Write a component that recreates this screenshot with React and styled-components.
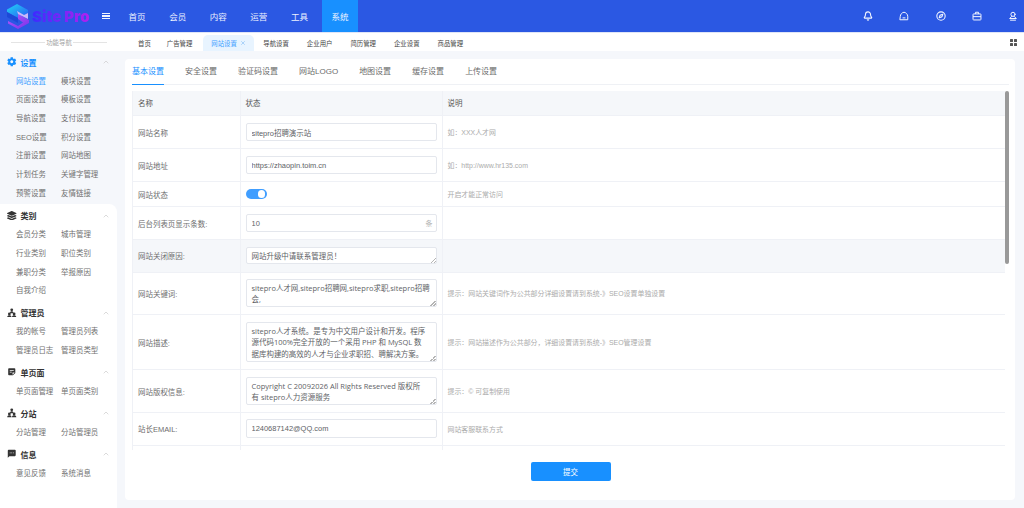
import styled, { createGlobalStyle } from 'styled-components';
import { Bell, ChevronUp, Compass, X } from 'lucide-react';
import { FaCog, FaLayerGroup } from 'react-icons/fa';
import { MdSms, MdStickyNote2 } from 'react-icons/md';

const FONT = '"Liberation Sans", "Noto Sans CJK SC", sans-serif';
const BLUE = '#1890ff';

const GlobalStyle = createGlobalStyle`
    html, body {
        margin: 0;
        padding: 0;
        height: 100%;
        overflow: hidden;
        background: #f5f7fb;
        font-family: ${FONT};
    }
    * {
        box-sizing: border-box;
    }
`;

const Page = styled.div`
    width: 1024px;
    height: 508px;
    display: flex;
    flex-direction: column;
    overflow: hidden;
`;

const Header = styled.header`
    flex: none;
    height: 33px;
    display: flex;
    align-items: stretch;
    background: #2b58e3;
    border-bottom: 1px solid #dfe5f7;
    color: #fff;
    padding-right: 6px;
`;

const Brand = styled.div`
    width: 102px;
    display: flex;
    align-items: center;
    gap: 2px;
    padding-left: 6px;
`;

const BrandName = styled.span`
    font-family: Inter, sans-serif;
    font-weight: 900;
    font-size: 15px;
    white-space: nowrap;
    background: linear-gradient(90deg, #3a2cff, #b420f0);
    -webkit-background-clip: text;
    background-clip: text;
    color: transparent;
`;

const MenuToggle = styled.div`
    width: 8px;
    display: flex;
    flex-direction: column;
    justify-content: center;
    gap: 1px;
    & > i {
        display: block;
        height: 1.4px;
        background: #f2f5ff;
    }
`;

const Nav = styled.nav`
    display: flex;
    gap: 4.4px;
    margin-left: 9px;
`;

const NavItem = styled.div`
    width: 36.2px;
    display: flex;
    align-items: center;
    justify-content: center;
    font-size: 8.5px;
    color: #eef2ff;
    background: ${(p) => (p.$active ? BLUE : 'transparent')};
`;

const HeaderIcons = styled.div`
    margin-left: auto;
    display: flex;
    align-items: center;
    gap: 26.2px;
    & > svg {
        width: 10px;
        height: 10px;
        color: #f2f5ff;
    }
`;

const Body = styled.div`
    flex: 1;
    min-height: 0;
    display: flex;
`;

const Sidebar = styled.aside`
    flex: none;
    width: 117px;
    display: flex;
    flex-direction: column;
`;

const SideTitle = styled.div`
    flex: none;
    height: 18px;
    background: #fff;
    display: flex;
    align-items: center;
    gap: 1px;
    padding: 0 10px 0 11px;
    font-size: 6.4px;
    color: #a3a3a3;
    &::before,
    &::after {
        content: '';
        flex: 1;
        height: 1px;
        background: #e4e4e4;
    }
`;

const ActiveGroup = styled.div`
    flex: none;
    padding-top: 2px;
`;

const RestGroups = styled.div`
    flex: 1;
    background: #fff;
    border-top-right-radius: 8px;
    padding-top: 2.5px;
`;

const Group = styled.section`
    padding-bottom: ${(p) => (p.$tight ? '2.5px' : '4.3px')};
`;

const GroupHead = styled.div`
    height: 18px;
    display: flex;
    align-items: center;
    padding: 0 7px;
    font-size: 8px;
    font-weight: 700;
    color: ${(p) => (p.$active ? BLUE : '#333')};
    & > svg:first-child {
        width: 9.5px;
        height: 9.5px;
        margin-right: 4px;
        color: ${(p) => (p.$active ? BLUE : '#333')};
    }
    & > svg:last-child {
        margin-left: auto;
        width: 8px;
        height: 8px;
        color: #c9c9c9;
    }
`;

const GroupItems = styled.div`
    display: grid;
    grid-template-columns: 45px 1fr;
    grid-auto-rows: 18.67px;
    align-items: center;
    padding-left: 16px;
`;

const GroupLink = styled.a`
    font-size: 7.47px;
    white-space: nowrap;
    color: ${(p) => (p.$active ? '#3d9eff' : '#707070')};
`;

const Main = styled.main`
    flex: 1;
    min-width: 0;
    display: flex;
    flex-direction: column;
`;

const TabBar = styled.div`
    flex: none;
    height: 18px;
    background: #fff;
    display: flex;
    align-items: flex-end;
    padding: 0 7px 0 12px;
`;

const PageTab = styled.div`
    position: relative;
    height: 16px;
    display: flex;
    align-items: center;
    gap: 3.4px;
    padding: 0 ${(p) => (p.$active ? '8px' : '9px')};
    margin-left: ${(p) => (p.$active ? '2px' : '0')};
    font-size: 6.4px;
    white-space: nowrap;
    color: ${(p) => (p.$active ? '#3d9eff' : '#444')};
    background: ${(p) => (p.$active ? '#e8f4ff' : 'transparent')};
    border-radius: 5px 5px 0 0;
    &:first-child {
        padding-right: 7px;
    }
    & > svg {
        width: 6px;
        height: 6px;
        color: #6fb3f3;
    }
`;

const GridIcon = styled.div`
    margin: 0 0 5.5px auto;
    width: 7px;
    height: 7px;
    display: grid;
    grid-template-columns: 1fr 1fr;
    gap: 1px;
    & > i {
        background: #555;
        border-radius: 0.5px;
    }
`;

const Content = styled.div`
    flex: 1;
    min-height: 0;
    padding: 8px 9px 8px 8px;
`;

const Card = styled.div`
    height: 100%;
    background: #fff;
    border-radius: 4px;
    padding: 0 6px 0 7px;
    display: flex;
    flex-direction: column;
`;

const CardTabs = styled.div`
    flex: none;
    height: 26px;
    display: flex;
    gap: 21px;
    border-bottom: 1px solid #eff1f5;
`;

const CardTab = styled.div`
    height: 25.5px;
    display: flex;
    align-items: center;
    padding-bottom: 1.5px;
    font-size: 8px;
    color: ${(p) => (p.$active ? BLUE : '#6b6b6b')};
    border-bottom: 1.5px solid ${(p) => (p.$active ? BLUE : 'transparent')};
`;

const TableArea = styled.div`
    position: relative;
    flex: none;
    height: 359px;
    margin-top: 5.5px;
    padding-right: 4px;
    overflow: hidden;
`;

const ScrollThumb = styled.div`
    position: absolute;
    top: 0;
    right: 0;
    width: 3.6px;
    height: 173px;
    background: #999;
    border-radius: 2px;
`;

const Table = styled.table`
    width: 100%;
    table-layout: fixed;
    border-collapse: collapse;
    font-size: 7.47px;
`;

const Row = styled.tr`
    height: ${(p) => p.$h}px;
    background: ${(p) => (p.$shaded ? '#f5f7fa' : '#fff')};
`;

const HeadCell = styled.th`
    padding: 0 5px;
    font-weight: 400;
    text-align: left;
    color: #555;
    background: #f5f7fa;
    border: 1px solid #eff1f6;
    border-width: 0 0 1px 1px;
`;

const Cell = styled.td`
    padding: 0 5px;
    font-size: ${(p) => (p.$hint ? '6.93px' : '7.47px')};
    color: ${(p) => (p.$hint ? '#ababab' : '#6e6e6e')};
    border: 1px solid #eff1f6;
    border-width: 0 0 1px 1px;
    white-space: ${(p) => (p.$hint ? 'nowrap' : 'normal')};
`;

const TextInput = styled.input`
    display: block;
    width: 100%;
    height: 18.7px;
    padding: 0 5px;
    font: 7.47px ${FONT};
    color: #606266;
    background: #fff;
    border: 1px solid #e4e7ed;
    border-radius: 2px;
    outline: none;
`;

const TextBlock = styled.textarea`
    display: block;
    width: 100%;
    height: ${(p) => p.$h}px;
    padding: 2.5px 5px;
    font: 7.47px/11.7px "Open Sans", "Noto Sans CJK SC", sans-serif;
    color: #606266;
    background: #fff;
    border: 1px solid #e4e7ed;
    border-radius: 2px;
    outline: none;
    resize: vertical;
    overflow: hidden;
    &::-webkit-resizer {
        background: linear-gradient(135deg, transparent 50%, #b5b5b5 50%, #b5b5b5 60%, transparent 60%, transparent 75%, #b5b5b5 75%, #b5b5b5 85%, transparent 85%) right bottom / 6px 6px no-repeat;
    }
`;

const UnitField = styled.div`
    display: flex;
    align-items: center;
    height: 18.7px;
    padding: 0 3px 0 5px;
    background: #fff;
    border: 1px solid #e4e7ed;
    border-radius: 2px;
    & > input {
        flex: 1;
        min-width: 0;
        border: 0;
        outline: none;
        padding: 0;
        font: 7.47px ${FONT};
        color: #606266;
    }
    & > span {
        font-size: 7px;
        color: #b5b5b5;
    }
`;

const Toggle = styled.div`
    width: 21px;
    height: 9.6px;
    padding: 1.2px;
    display: flex;
    justify-content: flex-end;
    border-radius: 5px;
    background: #409eff;
    & > i {
        width: 7.2px;
        height: 7.2px;
        border-radius: 50%;
        background: #fff;
    }
`;

const CardFooter = styled.div`
    flex: 1;
    display: flex;
    justify-content: center;
    align-items: flex-start;
    padding-top: 12.5px;
`;

const SubmitButton = styled.button`
    width: 80px;
    height: 18.7px;
    padding: 0;
    border: 0;
    border-radius: 2px;
    background: ${BLUE};
    color: #fff;
    font: 7.47px ${FONT};
`;

const Logo = () => (
    <svg width="24" height="27" viewBox="0 0 24 27">
        <defs>
            <linearGradient id="logoTop" x1="0" y1="0" x2="1" y2="1">
                <stop offset="0" stopColor="#1fd6f5" />
                <stop offset="1" stopColor="#2a5cf5" />
            </linearGradient>
            <linearGradient id="logoBottom" x1="0" y1="0" x2="1" y2="1">
                <stop offset="0" stopColor="#b45cff" />
                <stop offset="1" stopColor="#7a2fe8" />
            </linearGradient>
        </defs>
        <polygon points="11,1 22,7 22,10 12,15 1,9 1,6.5" fill="url(#logoTop)" />
        <polygon points="1,9 12,15 12,20 1,14" fill="#1d49d8" />
        <polygon points="12,11 23,17 23,20 12,26 2,20.5 2,18 12,23 17,19.5 12,16" fill="url(#logoBottom)" />
        <polygon points="11,8 18,12 22,10 22,16 12,11" fill="#c9b8fa" />
    </svg>
);

const HomeIcon = () => (
    <svg viewBox="0 0 24 24" fill="none" stroke="currentColor" strokeWidth="2.4" strokeLinejoin="round" strokeLinecap="round">
        <path d="M3 21h18v-8.5C21 8 16 3 12 3S3 8 3 12.5z" />
        <path d="M9.5 16.5h5" />
    </svg>
);

const CaseIcon = () => (
    <svg viewBox="0 0 24 24" fill="none" stroke="currentColor" strokeWidth="2.4" strokeLinejoin="round">
        <rect x="2.5" y="7" width="19" height="14.5" rx="1.5" />
        <path d="M8.5 7V3h7v4" />
        <path d="M2.5 13.5h19" />
    </svg>
);

const UserIcon = () => (
    <svg viewBox="0 0 24 24" fill="none" stroke="currentColor" strokeWidth="2.4" strokeLinecap="round">
        <circle cx="12" cy="8" r="5" />
        <path d="M9 13l-5 5h16l-5-5" strokeLinejoin="round" />
        <path d="M6 22h12" />
    </svg>
);

const PeopleIcon = () => (
    <svg viewBox="0 0 24 24" fill="currentColor">
        <circle cx="12" cy="4.5" r="3.5" />
        <path d="M7.5 13c0-3 2-4.5 4.5-4.5s4.5 1.500 4.500 4.500z" />
        <circle cx="6" cy="15" r="3.500" />
        <path d="M0.500 23.500c0-3.500 2.500-5 5.500-5s5.500 1.500 5.500 5z" />
        <circle cx="18" cy="15" r="3.500" />
        <path d="M12.500 23.500c0-3.500 2.500-5 5.500-5s5.500 1.500 5.500 5z" />
    </svg>
);

const navItems = ['首页', '会员', '内容', '运营', '工具', '系统'];

const moreGroups = [
    { title: '类别', icon: FaLayerGroup, links: ['会员分类', '城市管理', '行业类别', '职位类别', '兼职分类', '举报原因', '自我介绍'] },
    { title: '管理员', icon: PeopleIcon, links: ['我的帐号', '管理员列表', '管理员日志', '管理员类型'] },
    { title: '单页面', icon: MdStickyNote2, links: ['单页面管理', '单页面类别'] },
    { title: '分站', icon: PeopleIcon, links: ['分站管理', '分站管理员'] },
    { title: '信息', icon: MdSms, links: ['意见反馈', '系统消息'] },
];

const settingLinks = [
    '网站设置', '模块设置', '页面设置', '模板设置', '导航设置', '支付设置', 'SEO设置',
    '积分设置', '注册设置', '网站地图', '计划任务', '关键字管理', '预警设置', '友情链接',
];

const pageTabs = ['首页', '广告管理', '网站设置', '导航设置', '企业用户', '简历管理', '企业设置', '商品管理'];
const cardTabs = ['基本设置', '安全设置', '验证码设置', '网站LOGO', '地图设置', '缓存设置', '上传设置'];

const descText = 'sitepro人才系统。是专为中文用户设计和开发。程序\n源代码100%完全开放的一个采用 PHP 和 MySQL 数\n据库构建的高效的人才与企业求职招、聘解决方案。';
const copyrightText = 'Copyright C 20092026 All Rights Reserved 版权所\n有 sitepro人力资源服务';

const App = () => {
    return (
        <Page>
            <GlobalStyle />
            <Header>
                <Brand>
                    <Logo />
                    <BrandName>Site Pro</BrandName>
                </Brand>
                <MenuToggle><i /><i /><i /></MenuToggle>
                <Nav>
                    {navItems.map((item) => (
                        <NavItem key={item} $active={item === '系统'}>{item}</NavItem>
                    ))}
                </Nav>
                <HeaderIcons>
                    <Bell strokeWidth={2.6} />
                    <HomeIcon />
                    <Compass strokeWidth={2.6} />
                    <CaseIcon />
                    <UserIcon />
                </HeaderIcons>
            </Header>
            <Body>
                <Sidebar>
                    <SideTitle>功能导航</SideTitle>
                    <ActiveGroup>
                        <Group $tight>
                            <GroupHead $active>
                                <FaCog />
                                设置
                                <ChevronUp />
                            </GroupHead>
                            <GroupItems>
                                {settingLinks.map((link) => (
                                    <GroupLink key={link} $active={link === '网站设置'}>{link}</GroupLink>
                                ))}
                            </GroupItems>
                        </Group>
                    </ActiveGroup>
                    <RestGroups>
                        {moreGroups.map((group) => (
                            <Group key={group.title}>
                                <GroupHead>
                                    <group.icon />
                                    {group.title}
                                    <ChevronUp />
                                </GroupHead>
                                <GroupItems>
                                    {group.links.map((link) => (
                                        <GroupLink key={link}>{link}</GroupLink>
                                    ))}
                                </GroupItems>
                            </Group>
                        ))}
                    </RestGroups>
                </Sidebar>
                <Main>
                    <TabBar>
                        {pageTabs.map((tab) => (
                            <PageTab key={tab} $active={tab === '网站设置'}>
                                {tab}
                                {tab === '网站设置' && <X strokeWidth={2} />}
                            </PageTab>
                        ))}
                        <GridIcon><i /><i /><i /><i /></GridIcon>
                    </TabBar>
                    <Content>
                        <Card>
                            <CardTabs>
                                {cardTabs.map((tab) => (
                                    <CardTab key={tab} $active={tab === '基本设置'}>{tab}</CardTab>
                                ))}
                            </CardTabs>
                            <TableArea>
                                <Table>
                                    <colgroup>
                                        <col width="107.5" />
                                        <col width="202" />
                                        <col />
                                    </colgroup>
                                    <tbody>
                                        <Row $h={25}>
                                            <HeadCell>名称</HeadCell>
                                            <HeadCell>状态</HeadCell>
                                            <HeadCell>说明</HeadCell>
                                        </Row>
                                        <Row $h={33}>
                                            <Cell>网站名称</Cell>
                                            <Cell><TextInput defaultValue="sitepro招聘演示站" /></Cell>
                                            <Cell $hint>如：XXX人才网</Cell>
                                        </Row>
                                        <Row $h={33}>
                                            <Cell>网站地址</Cell>
                                            <Cell><TextInput defaultValue="https://zhaopin.toim.cn" /></Cell>
                                            <Cell $hint>如：http://www.hr135.com</Cell>
                                        </Row>
                                        <Row $h={25}>
                                            <Cell>网站状态</Cell>
                                            <Cell><Toggle><i /></Toggle></Cell>
                                            <Cell $hint>开启才能正常访问</Cell>
                                        </Row>
                                        <Row $h={33}>
                                            <Cell>后台列表页显示条数:</Cell>
                                            <Cell>
                                                <UnitField>
                                                    <input defaultValue="10" />
                                                    <span>条</span>
                                                </UnitField>
                                            </Cell>
                                            <Cell $hint />
                                        </Row>
                                        <Row $h={32.5} $shaded>
                                            <Cell>网站关闭原因:</Cell>
                                            <Cell><TextBlock $h={17} defaultValue="网站升级中请联系管理员！" /></Cell>
                                            <Cell $hint />
                                        </Row>
                                        <Row $h={42.5}>
                                            <Cell>网站关键词:</Cell>
                                            <Cell><TextBlock $h={28} defaultValue="sitepro人才网,sitepro招聘网,sitepro求职,sitepro招聘会," /></Cell>
                                            <Cell $hint>提示：网站关键词作为公共部分详细设置请到系统-》SEO设置单独设置</Cell>
                                        </Row>
                                        <Row $h={55}>
                                            <Cell>网站描述:</Cell>
                                            <Cell><TextBlock $h={40} defaultValue={descText} /></Cell>
                                            <Cell $hint>提示：网站描述作为公共部分，详细设置请到系统-》SEO管理设置</Cell>
                                        </Row>
                                        <Row $h={43}>
                                            <Cell>网站版权信息:</Cell>
                                            <Cell><TextBlock $h={28} defaultValue={copyrightText} /></Cell>
                                            <Cell $hint>提示：© 可复制使用</Cell>
                                        </Row>
                                        <Row $h={32.5}>
                                            <Cell>站长EMAIL:</Cell>
                                            <Cell><TextInput defaultValue="1240687142@QQ.com" /></Cell>
                                            <Cell $hint>网站客服联系方式</Cell>
                                        </Row>
                                        <Row $h={30}>
                                            <Cell />
                                            <Cell />
                                            <Cell $hint />
                                        </Row>
                                    </tbody>
                                </Table>
                                <ScrollThumb />
                            </TableArea>
                            <CardFooter>
                                <SubmitButton>提交</SubmitButton>
                            </CardFooter>
                        </Card>
                    </Content>
                </Main>
            </Body>
        </Page>
    );
};

export default App;
